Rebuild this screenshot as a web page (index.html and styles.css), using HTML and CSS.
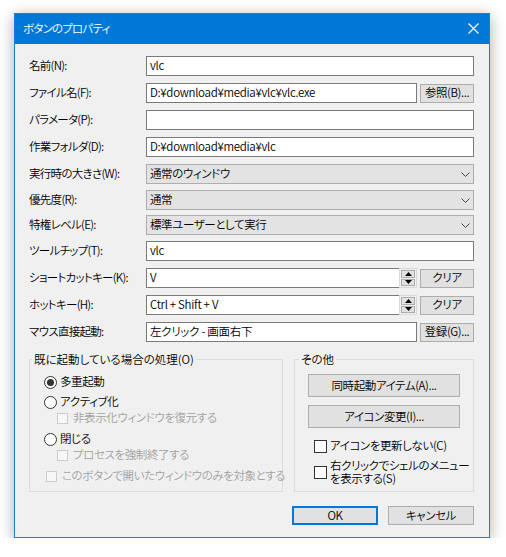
FILE: index.html
```html
<!DOCTYPE html>
<html lang="ja">
<head>
<meta charset="utf-8">
<title>ボタンのプロパティ</title>
<link rel="stylesheet" href="styles.css">
</head>
<body>
<div class="window">
  <div class="titlebar">
    <span class="title">ボタンのプロパティ</span>
    <svg class="close" width="11" height="11" viewBox="0 0 11 11"><path d="M0.5 0.5 L10.5 10.5 M10.5 0.5 L0.5 10.5" stroke="#fff" stroke-width="1.1" fill="none"/></svg>
  </div>
  <div class="client">
    <div class="form">
      <div class="lbl">名前(N):</div>
      <div class="field"><div class="tb grow">vlc</div></div>

      <div class="lbl">ファイル名(F):</div>
      <div class="field"><div class="tb grow">D:¥download¥media¥vlc¥vlc.exe</div><div class="btn side">参照(B)...</div></div>

      <div class="lbl">パラメータ(P):</div>
      <div class="field"><div class="tb grow"></div></div>

      <div class="lbl">作業フォルダ(D):</div>
      <div class="field"><div class="tb grow">D:¥download¥media¥vlc</div></div>

      <div class="lbl">実行時の大きさ(W):</div>
      <div class="field"><div class="combo grow"><span>通常のウィンドウ</span><svg class="chev" width="9" height="5" viewBox="0 0 9 5"><path d="M0.5 0.5 L4.5 4.5 L8.5 0.5" stroke="#444" fill="none"/></svg></div></div>

      <div class="lbl">優先度(R):</div>
      <div class="field"><div class="combo grow"><span>通常</span><svg class="chev" width="9" height="5" viewBox="0 0 9 5"><path d="M0.5 0.5 L4.5 4.5 L8.5 0.5" stroke="#444" fill="none"/></svg></div></div>

      <div class="lbl">特権レベル(E):</div>
      <div class="field"><div class="combo grow"><span>標準ユーザーとして実行</span><svg class="chev" width="9" height="5" viewBox="0 0 9 5"><path d="M0.5 0.5 L4.5 4.5 L8.5 0.5" stroke="#444" fill="none"/></svg></div></div>

      <div class="lbl">ツールチップ(T):</div>
      <div class="field"><div class="tb grow">vlc</div></div>

      <div class="lbl">ショートカットキー(K):</div>
      <div class="field">
        <div class="tb grow nor">V</div>
        <div class="spin"><div class="sb"><svg width="7" height="4" viewBox="0 0 7 4"><path d="M3.5 0 L7 4 L0 4 Z" fill="#000"/></svg></div><div class="sb"><svg width="7" height="4" viewBox="0 0 7 4"><path d="M0 0 L7 0 L3.5 4 Z" fill="#000"/></svg></div></div>
        <div class="btn side">クリア</div>
      </div>

      <div class="lbl">ホットキー(H):</div>
      <div class="field">
        <div class="tb grow nor">Ctrl + Shift + V</div>
        <div class="spin"><div class="sb"><svg width="7" height="4" viewBox="0 0 7 4"><path d="M3.5 0 L7 4 L0 4 Z" fill="#000"/></svg></div><div class="sb"><svg width="7" height="4" viewBox="0 0 7 4"><path d="M0 0 L7 0 L3.5 4 Z" fill="#000"/></svg></div></div>
        <div class="btn side">クリア</div>
      </div>

      <div class="lbl">マウス直接起動:</div>
      <div class="field"><div class="tb grow">左クリック - 画面右下</div><div class="btn side">登録(G)...</div></div>
    </div>

    <div class="groups">
      <fieldset class="group gleft">
        <legend class="lg-left">既に起動している場合の処理(O)</legend>
        <div class="opt r1"><span class="radio on"></span><span>多重起動</span></div>
        <div class="opt r2"><span class="radio"></span><span>アクティブ化</span></div>
        <div class="opt c1 dis"><span class="check dchk"></span><span>非表示化ウィンドウを復元する</span></div>
        <div class="opt r3"><span class="radio"></span><span>閉じる</span></div>
        <div class="opt c2 dis"><span class="check dchk"></span><span>プロセスを強制終了する</span></div>
        <div class="opt c3 dis"><span class="check dchk"></span><span>このボタンで開いたウィンドウのみを対象とする</span></div>
      </fieldset>
      <fieldset class="group gright">
        <legend class="lg-right">その他</legend>
        <div class="btn wide b1">同時起動アイテム(A)...</div>
        <div class="btn wide b2">アイコン変更(I)...</div>
        <div class="opt k1"><span class="check"></span><span>アイコンを更新しない(C)</span></div>
        <div class="opt k2"><span class="check"></span><span class="two">右クリックでシェルのメニュー<br>を表示する(S)</span></div>
      </fieldset>
    </div>

    <div class="footer">
      <div class="btn foot ok">OK</div>
      <div class="btn foot">キャンセル</div>
    </div>
  </div>
</div>
</body>
</html>
```
FILE: styles.css
```css
* { box-sizing: border-box; }

body {
  margin: 0;
  padding: 13px 0 0 14px;
  background: #fff;
  font-family: "Noto Sans CJK JP", "Noto Sans", sans-serif;
  font-size: 11.5px;
  font-weight: 350;
  letter-spacing: -0.4px;
  font-feature-settings: "palt";
  color: #000;
}

.window {
  width: 476px;
  height: 525px;
  border: 1px solid #1a7fd6;
  background: #f0f0f0;
  box-shadow: 0 3px 14px rgba(0, 0, 0, 0.33);
  display: flex;
  flex-direction: column;
}

.titlebar {
  height: 30px;
  background: #0078d7;
  color: #fff;
  display: flex;
  align-items: center;
  justify-content: space-between;
  padding: 0 10px 0 8px;
}

.title { line-height: 1; letter-spacing: -0.8px; }
.close { display: block; margin-top: -1px; }

.client {
  flex: 1;
  padding: 12px 15px 0 14px;
  display: flex;
  flex-direction: column;
}

.form {
  display: grid;
  grid-template-columns: 117px 328px;
  grid-template-rows: 27px 27px 27px 27px 26px 25px 26px 27px 27px 27px 20px;
}

.lbl {
  height: 20px;
  display: flex;
  align-items: center;
  line-height: 1;
  white-space: nowrap;
  letter-spacing: -0.7px;
}

.field {
  height: 20px;
  display: flex;
  align-items: center;
}

.grow { flex: 1; min-width: 0; }

.tb {
  height: 20px;
  border: 1px solid #7a7a7a;
  background: #fff;
  padding: 0 3px;
  display: flex;
  align-items: center;
  line-height: 1;
  white-space: nowrap;
  letter-spacing: -0.3px;
}
.tb.nor { border-right: none; }

.combo {
  height: 20px;
  border: 1px solid #adadad;
  background: #e3e3e3;
  padding: 0 3px;
  display: flex;
  align-items: center;
  justify-content: space-between;
  line-height: 1;
  white-space: nowrap;
}
.chev { display: block; }

.btn {
  border: 1px solid #adadad;
  background: #e1e1e1;
  display: flex;
  align-items: center;
  justify-content: center;
  line-height: 1;
  white-space: nowrap;
}

.side {
  width: 54px;
  height: 19px;
  margin-left: 3px;
}

.spin {
  width: 18px;
  height: 20px;
  border: 1px solid #d9d9d9;
  background: #f0f0f0;
  display: flex;
  flex-direction: column;
  padding: 1px;
  gap: 1px;
}
.sb {
  flex: 1;
  border: 1px solid #adadad;
  background: #e1e1e1;
  display: flex;
  align-items: center;
  justify-content: center;
}
.sb svg { display: block; }

.groups {
  display: flex;
  gap: 11px;
  margin-top: 10px;
}

.group {
  margin: 0;
  padding: 0;
  border: 1px solid #dcdcdc;
  height: 140px;
  min-width: 0;
}
.gleft { width: 254px; padding-left: 14px; }
.gright { width: 180px; padding-left: 13px; }

legend {
  padding: 0 2px;
  line-height: 14px;
  height: 14px;
  letter-spacing: 0;
}
.lg-left { margin-left: -12px; }
.lg-right { margin-left: -9px; }

.opt {
  display: flex;
  align-items: center;
  height: 14px;
  line-height: 1;
  white-space: nowrap;
}
.dis { color: #a0a0a0; }

.radio {
  width: 13px;
  height: 13px;
  border: 1px solid #333;
  border-radius: 50%;
  background: #fff;
  margin-right: 3px;
  display: flex;
  align-items: center;
  justify-content: center;
  flex: none;
}
.radio.on::after {
  content: "";
  width: 7px;
  height: 7px;
  border-radius: 50%;
  background: #333;
}

.check {
  width: 13px;
  height: 13px;
  border: 1px solid #333;
  background: #fff;
  margin-right: 3px;
  flex: none;
}
.dchk {
  width: 11px;
  height: 11px;
  border-color: #cccccc;
  background: #f7f7f7;
  margin-right: 5px;
}

.r1 { margin-top: 9px; }
.r2 { margin-top: 6px; }
.c1 { margin-top: 2px; margin-left: 13px; }
.r3 { margin-top: 7px; }
.c2 { margin-top: 2px; margin-left: 13px; }
.c3 { margin-top: 7px; margin-left: 2px; }

.wide { width: 152px; height: 23px; }
.b1 { margin-top: 8px; }
.b2 { margin-top: 8px; }

.k1 { margin-top: 11px; margin-left: 6px; }
.k2 { margin-top: 6px; margin-left: 6px; height: 26px; }
.two { line-height: 13px; }

.footer {
  display: flex;
  justify-content: flex-end;
  gap: 10px;
  margin-top: 14px;
}
.foot { width: 86px; height: 19px; }
.ok { border: 2px solid #0078d7; }
```
